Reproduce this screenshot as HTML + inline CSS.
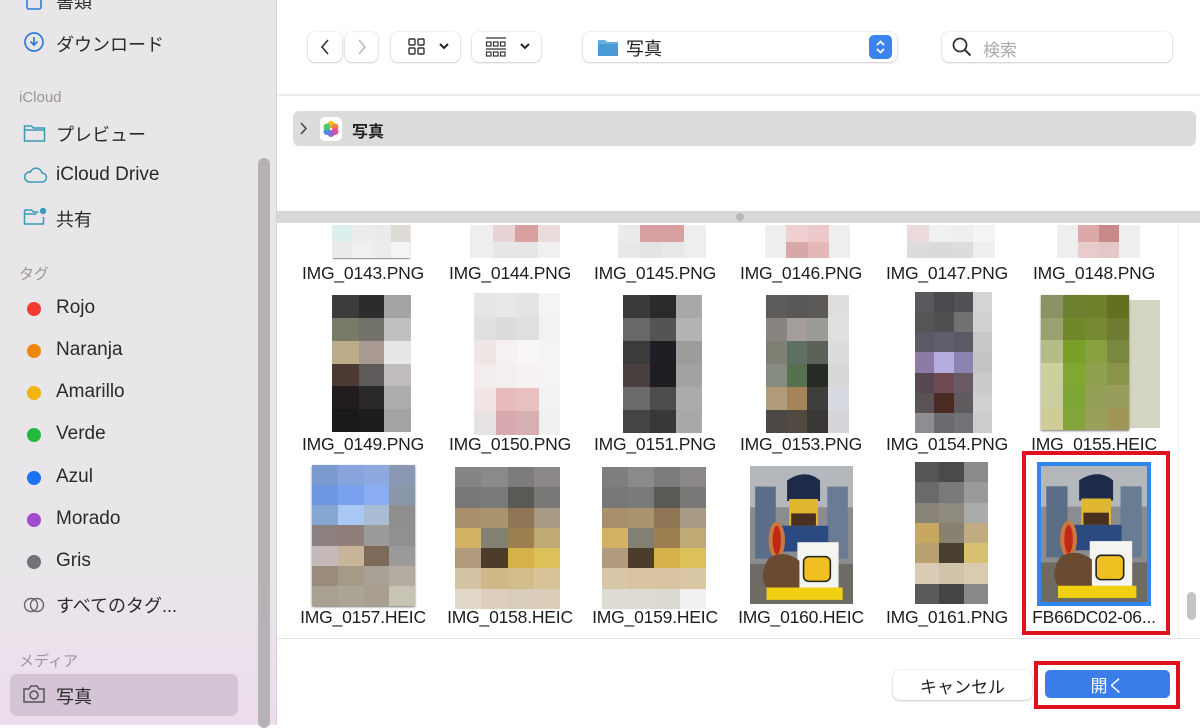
<!DOCTYPE html>
<html><head><meta charset="utf-8"><style>
*{margin:0;padding:0;box-sizing:border-box}
body{width:1200px;height:725px;overflow:hidden;background:#fff;font-family:"Liberation Sans","Noto Sans CJK JP",sans-serif;position:relative;color:#222}
.a{position:absolute}
#side{left:0;top:0;width:277px;height:725px;background:linear-gradient(#e9e6ea 0,#e9e6ea 78%,#ecdcec 100%);border-right:1px solid #d4d0d4}
.it{position:absolute;left:56px;font-size:18px;color:#2a2a2a;white-space:nowrap}
.l{font-size:19px}
.sec{position:absolute;left:19px;font-size:15px;color:#9a969a}
.dot{position:absolute;left:27px;width:14px;height:14px;border-radius:50%}
.btn{position:absolute;background:#fff;border-radius:7px;box-shadow:0 0.5px 2px rgba(0,0,0,.3);}
.lab{position:absolute;font-size:17.5px;color:#1e1e1e;width:146px;text-align:center;white-space:nowrap;letter-spacing:-0.2px}
.th{position:absolute;display:grid;overflow:hidden}
.th div{width:100%;height:100%}
</style></head><body>
<div id="side" class="a">
 <svg class="a" style="left:24px;top:-8px" width="20" height="20"><rect x="3" y="1" width="14" height="16" rx="2" fill="none" stroke="#2f7bd8" stroke-width="1.6"/></svg>
 <div class="it" style="top:-12px">書類</div>
 <svg class="a" style="left:23px;top:31px" width="22" height="22"><circle cx="11" cy="11" r="9" fill="none" stroke="#2f7bd8" stroke-width="1.7"/><path d="M11 6v8M7.5 10.5L11 14l3.5-3.5" fill="none" stroke="#2f7bd8" stroke-width="1.7"/></svg>
 <div class="it" style="top:31px">ダウンロード</div>
 <div class="sec" style="top:89px">iCloud</div>
 <svg class="a" style="left:23px;top:123px" width="24" height="20"><path d="M1.5 3h7l2 2h11v13h-20z M1.5 7h20" fill="none" stroke="#3a9ab8" stroke-width="1.5"/></svg>
 <div class="it" style="top:121px">プレビュー</div>
 <svg class="a" style="left:22px;top:165px" width="26" height="20"><path d="M7 17h13a4.5 4.5 0 0 0 0-9 6 6 0 0 0-11.5-1A5 5 0 0 0 7 17z" fill="none" stroke="#3a9ab8" stroke-width="1.5"/></svg>
 <div class="it l" style="top:164px">iCloud Drive</div>
 <svg class="a" style="left:23px;top:206px" width="26" height="22"><path d="M1.5 4h7l2 2h5 M1.5 4v14h19v-7 M1.5 8h12" fill="none" stroke="#3a9ab8" stroke-width="1.5"/><circle cx="20" cy="5" r="3.2" fill="#3a9ab8"/></svg>
 <div class="it" style="top:206px">共有</div>
 <div class="sec" style="top:263px">タグ</div>
 <div class="dot" style="top:302px;background:#f23a32"></div><div class="it l" style="top:297px">Rojo</div>
 <div class="dot" style="top:344px;background:#ee860c"></div><div class="it l" style="top:339px">Naranja</div>
 <div class="dot" style="top:386px;background:#f0b40c"></div><div class="it l" style="top:381px">Amarillo</div>
 <div class="dot" style="top:428px;background:#24b93a"></div><div class="it l" style="top:423px">Verde</div>
 <div class="dot" style="top:471px;background:#1a73f0"></div><div class="it l" style="top:466px">Azul</div>
 <div class="dot" style="top:513px;background:#a04acc"></div><div class="it l" style="top:508px">Morado</div>
 <div class="dot" style="top:555px;background:#737278"></div><div class="it l" style="top:550px">Gris</div>
 <svg class="a" style="left:22px;top:596px" width="26" height="18"><circle cx="9" cy="9" r="6.5" fill="none" stroke="#666" stroke-width="1.4"/><circle cx="15" cy="9" r="6.5" fill="none" stroke="#666" stroke-width="1.4"/></svg>
 <div class="it" style="top:592px">すべてのタグ...</div>
 <div class="sec" style="top:650px">メディア</div>
 <div class="a" style="left:10px;top:674px;width:228px;height:42px;background:#d4c4d6;border-radius:7px"></div>
 <svg class="a" style="left:22px;top:684px" width="24" height="20"><path d="M2 5h5l2-3h6l2 3h5v13h-20z" fill="none" stroke="#555" stroke-width="1.5"/><circle cx="12" cy="11" r="4" fill="none" stroke="#555" stroke-width="1.5"/></svg>
 <div class="it" style="top:683px">写真</div>
 <div class="a" style="left:258px;top:158px;width:12px;height:570px;background:#b6b2b6;border-radius:6px"></div>
</div>

<!-- toolbar -->
<div class="btn" style="left:308px;top:32px;width:34px;height:30px"></div>
<svg class="a" style="left:318px;top:38px" width="14" height="18"><path d="M10 2L4 9l6 7" fill="none" stroke="#333" stroke-width="1.6"/></svg>
<div class="btn" style="left:345px;top:32px;width:33px;height:30px"></div>
<svg class="a" style="left:355px;top:38px" width="14" height="18"><path d="M4 2l6 7-6 7" fill="none" stroke="#bbb" stroke-width="1.6"/></svg>
<div class="btn" style="left:391px;top:32px;width:69px;height:30px"></div>
<svg class="a" style="left:407px;top:37px" width="20" height="20"><g fill="none" stroke="#333" stroke-width="1.4"><rect x="2" y="2" width="6" height="6" rx="1"/><rect x="11" y="2" width="6" height="6" rx="1"/><rect x="2" y="11" width="6" height="6" rx="1"/><rect x="11" y="11" width="6" height="6" rx="1"/></g></svg>
<svg class="a" style="left:438px;top:41px" width="12" height="10"><path d="M2 3l4 4 4-4" fill="none" stroke="#222" stroke-width="2"/></svg>
<div class="btn" style="left:472px;top:32px;width:69px;height:30px"></div>
<svg class="a" style="left:485px;top:36px" width="22" height="22"><g fill="none" stroke="#333" stroke-width="1.2"><path d="M1 2h20"/><rect x="1.5" y="6" width="4.5" height="4"/><rect x="8.5" y="6" width="4.5" height="4"/><rect x="15.5" y="6" width="4.5" height="4"/><path d="M1 13h20"/><rect x="1.5" y="16" width="4.5" height="4"/><rect x="8.5" y="16" width="4.5" height="4"/><rect x="15.5" y="16" width="4.5" height="4"/></g></svg>
<svg class="a" style="left:519px;top:41px" width="12" height="10"><path d="M2 3l4 4 4-4" fill="none" stroke="#222" stroke-width="2"/></svg>
<div class="btn" style="left:583px;top:32px;width:314px;height:30px"></div>
<svg class="a" style="left:597px;top:37px" width="22" height="20"><path d="M1 3h7l2 2h11v14h-20z" fill="#6aaee0"/><rect x="1" y="7" width="20" height="12" fill="#4a9ad8"/></svg>
<div class="a" style="left:626px;top:35px;font-size:18px">写真</div>
<div class="a" style="left:869px;top:35px;width:23px;height:24px;background:#3a84ee;border-radius:5px"></div>
<svg class="a" style="left:872px;top:37px" width="17" height="20"><path d="M5 8l3.5-3.5L12 8M5 12l3.5 3.5L12 12" fill="none" stroke="#fff" stroke-width="1.8"/></svg>
<div class="btn" style="left:942px;top:32px;width:230px;height:30px"></div>
<svg class="a" style="left:951px;top:36px" width="22" height="22"><circle cx="9" cy="9" r="6.5" fill="none" stroke="#333" stroke-width="1.8"/><path d="M13.5 13.5l6 6" stroke="#333" stroke-width="2"/></svg>
<div class="a" style="left:983px;top:36px;font-size:17px;color:#aaa">検索</div>
<div class="a" style="left:277px;top:94px;width:923px;height:2px;background:#ececec"></div>

<!-- photos row -->
<div class="a" style="left:293px;top:111px;width:903px;height:35px;background:#dcdcdc;border-radius:6px"></div>
<svg class="a" style="left:298px;top:121px" width="12" height="16"><path d="M3 2l5 5.5-5 5.5" fill="none" stroke="#444" stroke-width="1.5"/></svg>
<div class="a" style="left:320px;top:117px;width:22px;height:24px;background:#fff;border-radius:5px"></div>
<svg class="a" style="left:321px;top:119px" width="20" height="20"><g opacity=".9"><circle cx="10" cy="5.5" r="3.5" fill="#f5b400"/><circle cx="14" cy="8" r="3.5" fill="#f07030"/><circle cx="14" cy="12.5" r="3.5" fill="#e0408a"/><circle cx="10" cy="14.5" r="3.5" fill="#9050d0"/><circle cx="6" cy="12.5" r="3.5" fill="#3a80e0"/><circle cx="6" cy="8" r="3.5" fill="#40c060"/></g></svg>
<div class="a" style="left:352px;top:118px;font-size:16px;font-weight:bold">写真</div>

<!-- divider -->
<div class="a" style="left:277px;top:211px;width:923px;height:12px;background:#d8d8d8"></div>
<div class="a" style="left:736px;top:213px;width:8px;height:8px;border-radius:50%;background:#b8b8b8"></div>
<div class="a" style="left:1178px;top:224px;width:1px;height:414px;background:#eee"></div>
<div class="a" style="left:1187px;top:592px;width:9px;height:28px;background:#c4c4c4;border-radius:5px"></div>

<!-- row1 partial thumbs -->
<div class="th" style="left:333px;top:225px;width:77px;height:33px;grid-template-columns:repeat(4,1fr);grid-template-rows:repeat(2,1fr);box-shadow:0 1px 1px #888"><div style="background:#dceeee"></div><div style="background:#ececec"></div><div style="background:#ebebeb"></div><div style="background:#dedad6"></div><div style="background:#eaeaea"></div><div style="background:#f0f0f0"></div><div style="background:#ececec"></div><div style="background:#f4f4f4"></div></div>
<div class="th" style="left:470px;top:225px;width:90px;height:33px;grid-template-columns:repeat(4,1fr);grid-template-rows:repeat(2,1fr)"><div style="background:#eee"></div><div style="background:#e8d4d4"></div><div style="background:#d9a0a0"></div><div style="background:#eadcdc"></div><div style="background:#eee"></div><div style="background:#e6e6e6"></div><div style="background:#e6e6e6"></div><div style="background:#f0f0f0"></div></div>
<div class="th" style="left:618px;top:225px;width:88px;height:33px;grid-template-columns:repeat(4,1fr);grid-template-rows:repeat(2,1fr)"><div style="background:#ebebeb"></div><div style="background:#d8a0a0"></div><div style="background:#d8a0a0"></div><div style="background:#eee"></div><div style="background:#e8e8e8"></div><div style="background:#e4e4e4"></div><div style="background:#e8e8e8"></div><div style="background:#eee"></div></div>
<div class="th" style="left:765px;top:225px;width:85px;height:33px;grid-template-columns:repeat(4,1fr);grid-template-rows:repeat(2,1fr)"><div style="background:#eee"></div><div style="background:#f0d0d0"></div><div style="background:#ecc8c8"></div><div style="background:#eee"></div><div style="background:#eee"></div><div style="background:#d8a8a8"></div><div style="background:#e4b8b8"></div><div style="background:#eee"></div></div>
<div class="th" style="left:907px;top:225px;width:88px;height:33px;grid-template-columns:repeat(4,1fr);grid-template-rows:repeat(2,1fr)"><div style="background:#eadada"></div><div style="background:#f0f0f0"></div><div style="background:#eee"></div><div style="background:#f4f4f4"></div><div style="background:#dcdcdc"></div><div style="background:#dadada"></div><div style="background:#dcdcdc"></div><div style="background:#eee"></div></div>
<div class="th" style="left:1057px;top:225px;width:83px;height:33px;grid-template-columns:repeat(4,1fr);grid-template-rows:repeat(2,1fr)"><div style="background:#eee"></div><div style="background:#dca8a8"></div><div style="background:#c88888"></div><div style="background:#eee"></div><div style="background:#eee"></div><div style="background:#e8cccc"></div><div style="background:#e4c8c8"></div><div style="background:#eee"></div></div>

<div class="lab" style="left:290px;top:263px">IMG_0143.PNG</div>
<div class="lab" style="left:437px;top:263px">IMG_0144.PNG</div>
<div class="lab" style="left:582px;top:263px">IMG_0145.PNG</div>
<div class="lab" style="left:728px;top:263px">IMG_0146.PNG</div>
<div class="lab" style="left:874px;top:263px">IMG_0147.PNG</div>
<div class="lab" style="left:1021px;top:263px">IMG_0148.PNG</div>

<!-- row2 -->
<div class="th" style="left:332px;top:295px;width:79px;height:137px;grid-template-columns:27fr 25fr 27fr;grid-template-rows:repeat(6,1fr)">
<div style="background:#3c3c3a"></div><div style="background:#2c2c2c"></div><div style="background:#a4a4a4"></div>
<div style="background:#787a68"></div><div style="background:#72726a"></div><div style="background:#c0c0c0"></div>
<div style="background:#bcac8a"></div><div style="background:#a89a90"></div><div style="background:#e6e6e6"></div>
<div style="background:#4e3a34"></div><div style="background:#5e5a5a"></div><div style="background:#c0bcbc"></div>
<div style="background:#221c1c"></div><div style="background:#2a2828"></div><div style="background:#acacac"></div>
<div style="background:#1a1818"></div><div style="background:#1e1c1c"></div><div style="background:#a4a4a4"></div></div>
<div class="th" style="left:474px;top:293px;width:86px;height:142px;grid-template-columns:repeat(4,1fr);grid-template-rows:repeat(6,1fr)">
<div style="background:#e6e6e6"></div><div style="background:#e8e8e8"></div><div style="background:#e4e4e4"></div><div style="background:#f4f4f4"></div>
<div style="background:#e0e0e0"></div><div style="background:#dcdcdc"></div><div style="background:#e0e0e0"></div><div style="background:#f2f2f2"></div>
<div style="background:#f0e6e6"></div><div style="background:#f6f0f0"></div><div style="background:#f8f6f6"></div><div style="background:#f4f4f4"></div>
<div style="background:#f2ecec"></div><div style="background:#f4eeee"></div><div style="background:#f6f2f2"></div><div style="background:#f4f4f4"></div>
<div style="background:#f0e4e4"></div><div style="background:#e8bcbc"></div><div style="background:#e8c0c0"></div><div style="background:#f2f2f2"></div>
<div style="background:#e6e2e2"></div><div style="background:#d8aab0"></div><div style="background:#d8b0b4"></div><div style="background:#f0f0f0"></div></div>
<div class="th" style="left:623px;top:295px;width:79px;height:138px;grid-template-columns:27fr 26fr 26fr;grid-template-rows:repeat(6,1fr)">
<div style="background:#3a3a3a"></div><div style="background:#2a2a2a"></div><div style="background:#a8a8a8"></div>
<div style="background:#686868"></div><div style="background:#545454"></div><div style="background:#b4b4b4"></div>
<div style="background:#3c3a3a"></div><div style="background:#1e1e24"></div><div style="background:#9c9c9c"></div>
<div style="background:#4a4040"></div><div style="background:#1e1e22"></div><div style="background:#a2a2a2"></div>
<div style="background:#6a6a6a"></div><div style="background:#4c4c4c"></div><div style="background:#ababab"></div>
<div style="background:#444"></div><div style="background:#383838"></div><div style="background:#a8a8a8"></div></div>
<div class="th" style="left:766px;top:295px;width:83px;height:138px;grid-template-columns:21fr 20fr 21fr 21fr;grid-template-rows:repeat(6,1fr)">
<div style="background:#5e5c5a"></div><div style="background:#5a5856"></div><div style="background:#5c5a58"></div><div style="background:#dedede"></div>
<div style="background:#8a8480"></div><div style="background:#a49e9a"></div><div style="background:#9a9a96"></div><div style="background:#e0e0e0"></div>
<div style="background:#7e8074"></div><div style="background:#5e7064"></div><div style="background:#5c6258"></div><div style="background:#dcdcdc"></div>
<div style="background:#868c80"></div><div style="background:#567050"></div><div style="background:#262c24"></div><div style="background:#d8d8d8"></div>
<div style="background:#b09a78"></div><div style="background:#a48458"></div><div style="background:#403e3a"></div><div style="background:#d8dae2"></div>
<div style="background:#4c4844"></div><div style="background:#524a40"></div><div style="background:#3a3836"></div><div style="background:#d6d6da"></div></div>
<div class="th" style="left:915px;top:292px;width:77px;height:141px;grid-template-columns:repeat(4,1fr);grid-template-rows:repeat(7,1fr)">
<div style="background:#5a5a5e"></div><div style="background:#4a4a4e"></div><div style="background:#525256"></div><div style="background:#d4d4d4"></div>
<div style="background:#555558"></div><div style="background:#505052"></div><div style="background:#707270"></div><div style="background:#d0d0d0"></div>
<div style="background:#5a5a64"></div><div style="background:#5e5e6c"></div><div style="background:#5a5a66"></div><div style="background:#c8c8c8"></div>
<div style="background:#8a7ca4"></div><div style="background:#b6aee0"></div><div style="background:#8a84b0"></div><div style="background:#c4c4c4"></div>
<div style="background:#584854"></div><div style="background:#6e4a54"></div><div style="background:#6a5a66"></div><div style="background:#cacaca"></div>
<div style="background:#5a5254"></div><div style="background:#4c2a24"></div><div style="background:#5e5a5e"></div><div style="background:#d0d0d0"></div>
<div style="background:#8e8e92"></div><div style="background:#6a6a70"></div><div style="background:#727278"></div><div style="background:#cccccc"></div></div>
<div class="a" style="left:1110px;top:300px;width:50px;height:128px;background:#d4d4c2"></div>
<div class="th" style="left:1041px;top:295px;width:88px;height:135px;grid-template-columns:repeat(4,1fr);grid-template-rows:repeat(6,1fr);box-shadow:0 1px 2px #777">
<div style="background:#8c9264"></div><div style="background:#6c8030"></div><div style="background:#6e8028"></div><div style="background:#647020"></div>
<div style="background:#9aa070"></div><div style="background:#70882a"></div><div style="background:#768a34"></div><div style="background:#6e7a30"></div>
<div style="background:#b6bc88"></div><div style="background:#7aa028"></div><div style="background:#88a040"></div><div style="background:#788840"></div>
<div style="background:#ccd09c"></div><div style="background:#7ea830"></div><div style="background:#8ea24e"></div><div style="background:#8a9448"></div>
<div style="background:#cccea0"></div><div style="background:#7ea434"></div><div style="background:#94a058"></div><div style="background:#9a9c5c"></div>
<div style="background:#d0cc98"></div><div style="background:#82a438"></div><div style="background:#98a05c"></div><div style="background:#a09658"></div></div>

<div class="lab" style="left:290px;top:434px">IMG_0149.PNG</div>
<div class="lab" style="left:437px;top:434px">IMG_0150.PNG</div>
<div class="lab" style="left:582px;top:434px">IMG_0151.PNG</div>
<div class="lab" style="left:728px;top:434px">IMG_0153.PNG</div>
<div class="lab" style="left:874px;top:434px">IMG_0154.PNG</div>
<div class="lab" style="left:1021px;top:434px">IMG_0155.HEIC</div>

<!-- row3 -->
<div class="th" style="left:312px;top:465px;width:103px;height:141px;grid-template-columns:repeat(4,1fr);grid-template-rows:repeat(7,1fr);box-shadow:0 1px 2px #777">
<div style="background:#7a9ad0"></div><div style="background:#88a4dc"></div><div style="background:#8ea8e0"></div><div style="background:#8a98b4"></div>
<div style="background:#6e98e2"></div><div style="background:#78a0ec"></div><div style="background:#8aacf0"></div><div style="background:#8a96aa"></div>
<div style="background:#86a6d4"></div><div style="background:#aac8f4"></div><div style="background:#a8bcd4"></div><div style="background:#8e8e8e"></div>
<div style="background:#8c8080"></div><div style="background:#8e8078"></div><div style="background:#9c9a98"></div><div style="background:#909090"></div>
<div style="background:#c4b8b8"></div><div style="background:#c8b498"></div><div style="background:#7e6a58"></div><div style="background:#9a9a9a"></div>
<div style="background:#9a8c7a"></div><div style="background:#a49a86"></div><div style="background:#a8a094"></div><div style="background:#b4aca2"></div>
<div style="background:#a8a090"></div><div style="background:#aca494"></div><div style="background:#a89e92"></div><div style="background:#c8c4b4"></div></div>
<div class="th" style="left:455px;top:467px;width:105px;height:142px;grid-template-columns:repeat(4,1fr);grid-template-rows:repeat(7,1fr)">
<div style="background:#848484"></div><div style="background:#8a8a8a"></div><div style="background:#7c7c7c"></div><div style="background:#8c8888"></div>
<div style="background:#787878"></div><div style="background:#7a7a7a"></div><div style="background:#5a5a54"></div><div style="background:#7a7876"></div>
<div style="background:#a8906c"></div><div style="background:#a8946e"></div><div style="background:#8e7654"></div><div style="background:#a89a84"></div>
<div style="background:#d4b264"></div><div style="background:#828070"></div><div style="background:#9c8050"></div><div style="background:#c0aa74"></div>
<div style="background:#b09c7c"></div><div style="background:#4e3c2a"></div><div style="background:#d4b248"></div><div style="background:#dcc058"></div>
<div style="background:#d4c4a4"></div><div style="background:#d0b888"></div><div style="background:#d4bc8a"></div><div style="background:#d8c498"></div>
<div style="background:#e2d8c8"></div><div style="background:#dcd0bc"></div><div style="background:#d8ccba"></div><div style="background:#dccdb8"></div></div>
<div class="th" style="left:602px;top:467px;width:104px;height:142px;grid-template-columns:repeat(4,1fr);grid-template-rows:repeat(7,1fr)">
<div style="background:#7e7e7e"></div><div style="background:#8a8a8a"></div><div style="background:#7c7c7c"></div><div style="background:#8c8888"></div>
<div style="background:#787878"></div><div style="background:#7a7a7a"></div><div style="background:#5a5a54"></div><div style="background:#7a7876"></div>
<div style="background:#a8906c"></div><div style="background:#a8946e"></div><div style="background:#8e7654"></div><div style="background:#a89a84"></div>
<div style="background:#d4b264"></div><div style="background:#828070"></div><div style="background:#9c8050"></div><div style="background:#c0aa74"></div>
<div style="background:#b09c7c"></div><div style="background:#4e3c2a"></div><div style="background:#d4b248"></div><div style="background:#dcc058"></div>
<div style="background:#d8c8a8"></div><div style="background:#d8c4a0"></div><div style="background:#d8c4a0"></div><div style="background:#dac8a4"></div>
<div style="background:#dedad4"></div><div style="background:#dedad4"></div><div style="background:#dcd8d2"></div><div style="background:#f0f0f0"></div></div>

<svg class="a" style="left:750px;top:466px" width="103" height="138" viewBox="0 0 100 134" preserveAspectRatio="none">
<rect width="100" height="134" fill="#8a8c90"/><rect x="0" y="0" width="100" height="40" fill="#b4b8bc"/>
<rect x="5" y="20" width="20" height="70" fill="#5a6e88"/><rect x="75" y="20" width="20" height="70" fill="#6a7c94"/>
<rect x="0" y="95" width="100" height="39" fill="#6e6a64"/>
<path d="M36 14q18-12 32 0v20h-32z" fill="#1e2a4a"/><rect x="38" y="32" width="28" height="26" fill="#e0b830"/><rect x="40" y="46" width="24" height="12" fill="#4a3020"/>
<rect x="30" y="58" width="46" height="25" fill="#2a4a80"/>
<ellipse cx="26" cy="72" rx="8" ry="18" fill="#c87840"/><ellipse cx="26" cy="72" rx="4" ry="14" fill="#c02818"/>
<rect x="46" y="74" width="40" height="48" fill="#f4f4f0"/><rect x="52" y="88" width="26" height="24" rx="5" fill="#f0c020" stroke="#222" stroke-width="1.5"/>
<path d="M18 90q-12 20 2 32h28v-30q-16-12-30-2z" fill="#6a4a30"/>
<rect x="16" y="118" width="74" height="12" fill="#f0d010"/>
</svg>
<div class="th" style="left:915px;top:462px;width:73px;height:142px;grid-template-columns:repeat(3,1fr);grid-template-rows:repeat(7,1fr)">
<div style="background:#555"></div><div style="background:#4a4a4a"></div><div style="background:#8a8a8a"></div>
<div style="background:#6a6a6a"></div><div style="background:#7a7a7a"></div><div style="background:#9a9a9a"></div>
<div style="background:#8a8478"></div><div style="background:#8e8a80"></div><div style="background:#aaa"></div>
<div style="background:#c8a860"></div><div style="background:#888070"></div><div style="background:#c0ac80"></div>
<div style="background:#b8a070"></div><div style="background:#4a4030"></div><div style="background:#d8c070"></div>
<div style="background:#d8ccb4"></div><div style="background:#d0c4a8"></div><div style="background:#d8ccb0"></div>
<div style="background:#5a5a5a"></div><div style="background:#444"></div><div style="background:#888"></div></div>

<div class="a" style="left:1037px;top:462px;width:114px;height:144px;border:3px solid #2f86ee;background:#2f86ee"></div>
<svg class="a" style="left:1041px;top:466px" width="106" height="136" viewBox="0 0 100 134" preserveAspectRatio="none">
<rect width="100" height="134" fill="#8a8c90"/><rect x="0" y="0" width="100" height="40" fill="#b4b8bc"/>
<rect x="5" y="20" width="20" height="70" fill="#5a6e88"/><rect x="75" y="20" width="20" height="70" fill="#6a7c94"/>
<rect x="0" y="95" width="100" height="39" fill="#6e6a64"/>
<path d="M36 14q18-12 32 0v20h-32z" fill="#1e2a4a"/><rect x="38" y="32" width="28" height="26" fill="#e0b830"/><rect x="40" y="46" width="24" height="12" fill="#4a3020"/>
<rect x="30" y="58" width="46" height="25" fill="#2a4a80"/>
<ellipse cx="26" cy="72" rx="8" ry="18" fill="#c87840"/><ellipse cx="26" cy="72" rx="4" ry="14" fill="#c02818"/>
<rect x="46" y="74" width="40" height="48" fill="#f4f4f0"/><rect x="52" y="88" width="26" height="24" rx="5" fill="#f0c020" stroke="#222" stroke-width="1.5"/>
<path d="M18 90q-12 20 2 32h28v-30q-16-12-30-2z" fill="#6a4a30"/>
<rect x="16" y="118" width="74" height="12" fill="#f0d010"/>
</svg>

<div class="lab" style="left:290px;top:607px">IMG_0157.HEIC</div>
<div class="lab" style="left:437px;top:607px">IMG_0158.HEIC</div>
<div class="lab" style="left:582px;top:607px">IMG_0159.HEIC</div>
<div class="lab" style="left:728px;top:607px">IMG_0160.HEIC</div>
<div class="lab" style="left:874px;top:607px">IMG_0161.PNG</div>
<div class="lab" style="left:1021px;top:607px">FB66DC02-06...</div>

<div class="a" style="left:1022px;top:451px;width:148px;height:184px;border:4px solid #e0101e"></div>

<div class="a" style="left:277px;top:638px;width:923px;height:1px;background:#e4e4e4"></div>

<div class="btn" style="left:893px;top:670px;width:139px;height:30px"></div>
<div class="a" style="left:893px;top:673px;width:139px;text-align:center;font-size:17px">キャンセル</div>
<div class="a" style="left:1034px;top:661px;width:146px;height:48px;border:4px solid #e0101e"></div>
<div class="a" style="left:1045px;top:670px;width:125px;height:28px;background:#3a7ce8;border-radius:5px"></div>
<div class="a" style="left:1045px;top:672px;width:125px;text-align:center;font-size:17px;color:#fff">開く</div>
</body></html>
